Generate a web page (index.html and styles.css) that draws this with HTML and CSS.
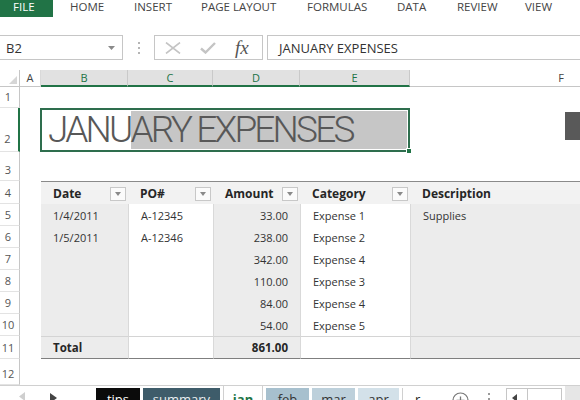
FILE: index.html
```html
<!DOCTYPE html>
<html>
<head>
<meta charset="utf-8">
<title>January Expenses</title>
<link rel="stylesheet" href="styles.css">
</head>
<body>
<div class="app">
  <nav class="ribbon">
    <span class="rtab file">FILE</span><span class="rgap"></span>
    <span class="rtab">HOME</span><span class="rtab">INSERT</span><span class="rtab">PAGE LAYOUT</span><span class="rtab">FORMULAS</span><span class="rtab">DATA</span><span class="rtab">REVIEW</span><span class="rtab">VIEW</span>
  </nav>

  <div class="fbar">
    <div class="namebox"><span>B2</span><svg width="7" height="4" viewBox="0 0 7 4"><path d="M0 0H7L3.5 4Z" fill="#8a8a8a"/></svg></div>
    <div class="vdots"><i></i><i></i><i></i></div>
    <div class="fxbox">
      <svg class="ic-x" width="18" height="12" viewBox="0 0 18 12"><path d="M2 0.5L16 11.5M16 0.5L2 11.5" stroke="#c4c4c4" stroke-width="1.6" fill="none"/></svg>
      <svg class="ic-ok" width="16" height="12" viewBox="0 0 16 12"><path d="M1 6.5L5.5 10.5L15 1" stroke="#c4c4c4" stroke-width="2.4" fill="none"/></svg>
      <span class="fx">fx</span>
    </div>
    <div class="formula">JANUARY EXPENSES</div>
  </div>

  <div class="sheet">
    <!-- column headers -->
    <div class="corner"><svg width="8" height="8" viewBox="0 0 8 8"><path d="M8 0V8H0Z" fill="#d6d6d6"/></svg></div>
    <div class="ch">A</div>
    <div class="ch sel">B</div>
    <div class="ch sel">C</div>
    <div class="ch sel">D</div>
    <div class="ch sel">E</div>
    <div class="ch last">F</div>

    <!-- row 1 -->
    <div class="rh">1</div>
    <div class="blank span6"></div>

    <!-- row 2 -->
    <div class="rh rsel">2</div>
    <div class="blank"></div>
    <div class="title">
      <span class="t1">JANU</span><span class="t2">ARY EXPENSES</span>
      <i class="handle"></i>
    </div>
    <div class="fcell"><div class="darkbox"></div></div>

    <!-- row 3 -->
    <div class="rh">3</div>
    <div class="blank span6"></div>

    <!-- row 4: table header -->
    <div class="rh">4</div>
    <div class="blank"></div>
    <div class="th">Date<span class="dd"></span></div>
    <div class="th">PO#<span class="dd"></span></div>
    <div class="th">Amount<span class="dd"></span></div>
    <div class="th">Category<span class="dd"></span></div>
    <div class="th">Description</div>

    <!-- row 5 -->
    <div class="rh">5</div>
    <div class="blank"></div>
    <div class="td band first">1/4/2011</div>
    <div class="td">A-12345</div>
    <div class="td band num">33.00</div>
    <div class="td">Expense 1</div>
    <div class="td band">Supplies</div>

    <!-- row 6 -->
    <div class="rh">6</div>
    <div class="blank"></div>
    <div class="td band first">1/5/2011</div>
    <div class="td">A-12346</div>
    <div class="td band num">238.00</div>
    <div class="td">Expense 2</div>
    <div class="td band"></div>

    <!-- row 7 -->
    <div class="rh">7</div>
    <div class="blank"></div>
    <div class="td band first"></div>
    <div class="td"></div>
    <div class="td band num">342.00</div>
    <div class="td">Expense 4</div>
    <div class="td band"></div>

    <!-- row 8 -->
    <div class="rh">8</div>
    <div class="blank"></div>
    <div class="td band first"></div>
    <div class="td"></div>
    <div class="td band num">110.00</div>
    <div class="td">Expense 3</div>
    <div class="td band"></div>

    <!-- row 9 -->
    <div class="rh">9</div>
    <div class="blank"></div>
    <div class="td band first"></div>
    <div class="td"></div>
    <div class="td band num">84.00</div>
    <div class="td">Expense 4</div>
    <div class="td band"></div>

    <!-- row 10 -->
    <div class="rh">10</div>
    <div class="blank"></div>
    <div class="td band first"></div>
    <div class="td"></div>
    <div class="td band num">54.00</div>
    <div class="td">Expense 5</div>
    <div class="td band"></div>

    <!-- row 11: total -->
    <div class="rh">11</div>
    <div class="blank"></div>
    <div class="td band first tot">Total</div>
    <div class="td tot"></div>
    <div class="td band num tot">861.00</div>
    <div class="td tot"></div>
    <div class="td band tot"></div>

    <!-- row 12 -->
    <div class="rh">12</div>
    <div class="blank span6"></div>
  </div>

  <div class="tabbar">
    <div class="navarrows">
      <svg class="nav-l" width="6" height="9" viewBox="0 0 6 9"><path d="M6 0V9L0 4.5Z" fill="#cfcfcf"/></svg>
      <svg class="nav-r" width="7" height="10" viewBox="0 0 7 10"><path d="M0 0V10L7 5Z" fill="#444"/></svg>
    </div>
    <div class="stabs">
      <span class="stab tips">tips</span>
      <span class="stab summary">summary</span>
      <span class="stab jan">jan</span>
      <span class="stab feb">feb</span>
      <span class="stab mar">mar</span>
      <span class="stab apr">apr</span>
      <span class="stab more">r</span>
    </div>
    <svg class="addsheet" width="17" height="17" viewBox="0 0 17 17"><circle cx="8.5" cy="8.5" r="7.5" fill="none" stroke="#777" stroke-width="1.2"/><path d="M8.5 4.5V12.5M4.5 8.5H12.5" stroke="#777" stroke-width="1.3"/></svg>
    <div class="tdots"><i></i><i></i><i></i></div>
    <div class="hscroll"><svg width="5" height="8" viewBox="0 0 5 8"><path d="M5 0V8L0 4Z" fill="#444"/></svg><span class="thumbline"></span></div>
    <div class="scrollrest"></div>
  </div>
</div>
</body>
</html>
```

FILE: styles.css
```css
* { box-sizing: border-box; }

html, body {
  margin: 0;
  padding: 0;
  background: #fff;
}

body {
  width: 580px;
  height: 400px;
  overflow: hidden;
  font-family: "Open Sans", "Liberation Sans", sans-serif;
  color: #444;
}

.app {
  width: 580px;
  height: 400px;
  display: flex;
  flex-direction: column;
  overflow: hidden;
}

/* ---------- ribbon ---------- */
.ribbon {
  height: 18px;
  display: grid;
  grid-template-columns: 53px 17px 64px 67px 106px 90px 60px 68px 1fr;
  font-size: 11.5px;
  line-height: 14px;
  color: #444;
}

.rtab {
  white-space: nowrap;
  padding-top: 0;
}

.file {
  background: #217346;
  color: #fff;
  padding-left: 13px;
  height: 17px;
}

/* ---------- formula bar ---------- */
.fbar {
  margin-top: 17px;
  height: 25px;
  display: flex;
  align-items: stretch;
  font-size: 13px;
}

.namebox {
  width: 123px;
  border: 1px solid #c6c6c6;
  border-left: none;
  display: flex;
  align-items: center;
  justify-content: space-between;
  padding: 0 7px 0 6px;
  color: #333;
}

.vdots {
  width: 31px;
  display: flex;
  flex-direction: column;
  align-items: center;
  justify-content: center;
  gap: 3px;
}

.vdots i {
  display: block;
  width: 2px;
  height: 2px;
  background: #b5b5b5;
}

.fxbox {
  width: 109px;
  border: 1px solid #c6c6c6;
  display: flex;
  align-items: center;
  padding-left: 9px;
}

.ic-x { margin-right: 18px; }
.ic-ok { margin-right: 19px; }

.fx {
  font-family: "Liberation Serif", "DejaVu Serif", serif;
  font-style: italic;
  font-size: 19px;
  color: #555;
  line-height: 20px;
}

.formula {
  flex: 1;
  margin-left: 4px;
  margin-right: -2px;
  border: 1px solid #c6c6c6;
  display: flex;
  align-items: center;
  padding-left: 11px;
  color: #333;
  white-space: nowrap;
}

/* ---------- sheet ---------- */
.sheet {
  margin-top: 10px;
  height: 315px;
  display: grid;
  grid-template-columns: 20px 21px 87px 85px 87px 110px 1fr;
  grid-template-rows: 17px 21px 44px 29px 23px repeat(6, 22px) 23px 26px;
  overflow: hidden;
}

.corner {
  border-right: 1px solid #c6c6c6;
  border-bottom: 1px solid #c6c6c6;
  display: flex;
  align-items: flex-end;
  justify-content: flex-end;
  padding: 0 2px 2px 0;
}

.ch {
  border-right: 1px solid #d9d9d9;
  border-bottom: 1px solid #c6c6c6;
  font-size: 11px;
  line-height: 16px;
  text-align: center;
  color: #444;
}

.ch.sel {
  background: #e1e1e1;
  color: #217346;
  border-bottom: 2px solid #217346;
  border-right-color: #c9c9c9;
}

.ch.last {
  text-align: right;
  padding-right: 16px;
  border-right: none;
}

.rh {
  border-right: 1px solid #c6c6c6;
  border-bottom: 1px solid #e3e3e3;
  font-size: 11px;
  color: #555;
  display: flex;
  align-items: flex-end;
  justify-content: center;
  padding-right: 3px;
  padding-bottom: 3px;
  line-height: 14px;
}

.rh.rsel {
  border-right: 2px solid #217346;
  padding-bottom: 5px;
}

.blank { }
.span6 { grid-column: span 6; }

/* title */
.title {
  grid-column: span 4;
  margin-left: -1px;
  border: 2px solid #2e6e4e;
  padding: 1px 1px 1px 0;
  display: flex;
  position: relative;
  font-family: Roboto, "Open Sans", sans-serif;
  font-weight: 300;
  font-size: 37px;
  letter-spacing: -2.8px;
  line-height: 38px;
  color: #585858;
  white-space: nowrap;
}

.t1 {
  padding-left: 6px;
  background: #fff;
}

.t2 {
  flex: 1;
  background: #c6c6c6;
}

.handle {
  position: absolute;
  right: -4px;
  bottom: -4px;
  width: 6px;
  height: 6px;
  background: #217346;
  border: 1px solid #fff;
}

.fcell {
  display: flex;
  justify-content: flex-end;
  align-items: flex-start;
  padding-top: 4px;
}

.darkbox {
  width: 15px;
  height: 28px;
  background: #595959;
}

/* table */
.th {
  background: #f2f2f2;
  border-top: 1px solid #8a8a8a;
  display: flex;
  align-items: center;
  justify-content: space-between;
  padding: 1px 2px 0 12px;
  font-size: 12px;
  font-weight: 700;
  color: #262626;
  white-space: nowrap;
}

.dd {
  width: 16px;
  height: 14px;
  border: 1px solid #c8c8c8;
  background: #fbfbfb;
  position: relative;
}

.dd::after {
  content: "";
  position: absolute;
  left: 4px;
  top: 4px;
  border-left: 3px solid transparent;
  border-right: 3px solid transparent;
  border-top: 4px solid #8a8a8a;
}

.td {
  font-size: 11px;
  color: #333;
  display: flex;
  align-items: center;
  padding: 0 12px;
  border-left: 1px solid #d9d9d9;
  background: #fff;
  white-space: nowrap;
}

.td.first { border-left: none; }

.td.band { background: #ececec; }

.td.num { justify-content: flex-end; }

.td.tot {
  border-top: 1px solid #d4d4d4;
  border-bottom: 1px solid #7f7f7f;
  font-weight: 700;
  font-size: 11.5px;
  color: #262626;
}

/* ---------- sheet tabs ---------- */
.tabbar {
  height: 15px;
  border-top: 1px solid #d0d0d0;
  display: flex;
  align-items: flex-start;
  overflow: hidden;
  background: #fff;
}

.navarrows {
  width: 96px;
  display: flex;
  align-items: flex-start;
  padding-left: 19px;
}

.nav-l { margin-top: 6px; }
.nav-r { margin-top: 7px; margin-left: 25px; }

.stabs {
  display: flex;
  gap: 3px;
  margin-top: 2px;
}

.stab {
  height: 18px;
  font-size: 13px;
  line-height: 16px;
  padding-top: 3px;
  text-align: center;
  color: #333;
}

.tips { width: 44px; background: #0b0b0b; color: #fff; }
.summary { width: 77px; background: #3e5c6a; color: #e9eef0; }
.jan { width: 40px; background: #fff; color: #217346; font-weight: 700; border-left: 1px solid #d0d0d0; border-right: 1px solid #d0d0d0; margin-top: -2px; padding-top: 5px; height: 20px; }
.feb { width: 43px; background: #a7c0ce; }
.mar { width: 43px; background: #bdd0db; }
.apr { width: 41px; background: #d3e1e9; }
.more { width: 44px; background: #fff; border-left: 1px solid #d0d0d0; text-align: left; padding-left: 12px; color: #222; }

.addsheet {
  margin-left: 6px;
  margin-top: 6px;
}

.tdots {
  width: 40px;
  display: flex;
  flex-direction: column;
  align-items: center;
  gap: 3px;
  margin-top: 7px;
}

.tdots i {
  display: block;
  width: 2px;
  height: 2px;
  background: #9a9a9a;
}

.hscroll {
  width: 56px;
  height: 16px;
  margin-top: 2px;
  margin-left: -3px;
  border: 1px solid #c6c6c6;
  display: flex;
  align-items: flex-start;
  padding: 5px 0 0 5px;
}

.thumbline {
  width: 1px;
  height: 14px;
  background: #c6c6c6;
  margin-left: 10px;
  margin-top: -5px;
}

.scrollrest {
  flex: 1;
  height: 15px;
  margin-left: 3px;
  background: #e6e6e6;
}
```
